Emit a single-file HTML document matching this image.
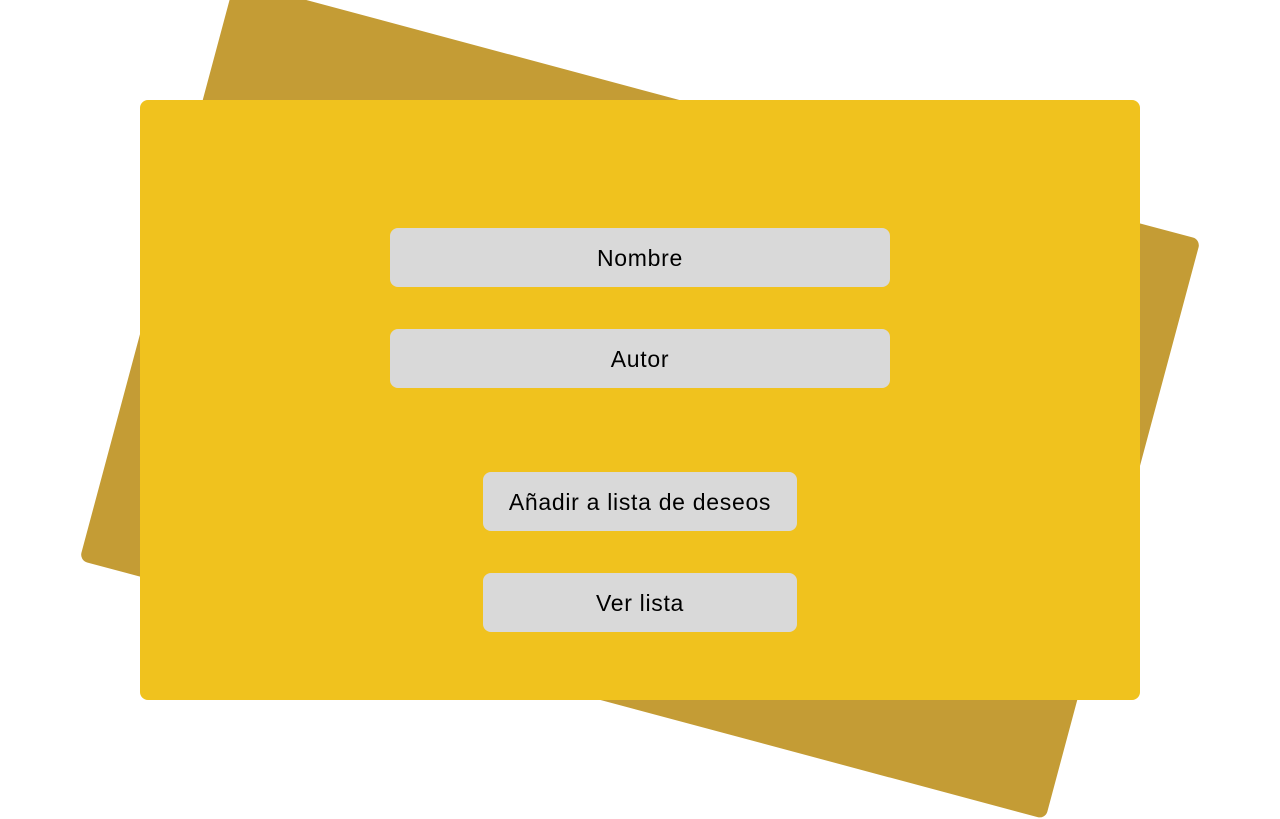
<!DOCTYPE html>
<html><head><meta charset="utf-8"><style>
html,body{margin:0;padding:0;width:1280px;height:800px;overflow:hidden;background:#fff;font-family:"Liberation Sans",sans-serif}
.back{position:absolute;left:140px;top:100px;width:1000px;height:600px;background:#C49C35;border-radius:8px;transform:rotate(15deg)}
.card{position:absolute;left:140px;top:100px;width:1000px;height:600px;background:#F0C21E;border-radius:8px}
.f{position:absolute;background:#D9D9D9;border-radius:8px;display:flex;align-items:center;justify-content:center;font-size:23px;letter-spacing:0.7px;color:#000;padding-top:2px;box-sizing:border-box}
</style></head><body>
<div class="back"></div>
<div class="card"></div>
<div class="f" style="left:390px;top:228px;width:500px;height:59px">Nombre</div>
<div class="f" style="left:390px;top:329px;width:500px;height:59px">Autor</div>
<div class="f" style="left:483px;top:472px;width:314px;height:59px">Añadir a lista de deseos</div>
<div class="f" style="left:483px;top:573px;width:314px;height:59px">Ver lista</div>
</body></html>
